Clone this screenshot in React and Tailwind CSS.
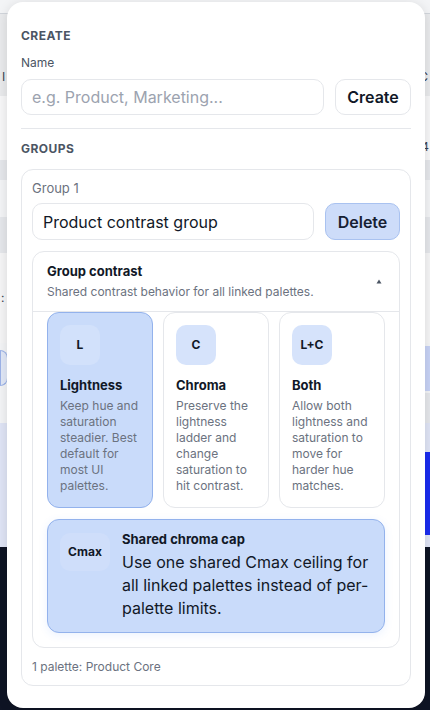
import React from "react";

const font = { fontFamily: "Inter, 'Noto Sans', sans-serif" };

function Option({ badge, title, lines, selected }) {
  return (
    <div
      className={
        "flex flex-col rounded-[12px] border px-[12px] pb-[13px] pt-[12px] " +
        (selected ? "border-[#93b2ec] bg-[#c9dbfa]" : "border-[#e5e7eb] bg-white")
      }
    >
      <div
        className={
          "flex h-[40px] w-[40px] items-center justify-center rounded-[10px] text-[12px] font-bold text-[#111827] " +
          (selected ? "bg-[#d2e1fb]" : "bg-[#d6e3fb]")
        }
      >
        {badge}
      </div>
      <div className="mt-[12px] text-[13px] font-bold leading-[16px] text-[#111827]">{title}</div>
      <div className="mt-[5px] text-[12px] leading-[16px] text-[#6b7280]">
        {lines.map((l, i) => (
          <div key={i} className="whitespace-nowrap">{l}</div>
        ))}
      </div>
    </div>
  );
}

export default function App() {
  return (
    <div className="relative h-[710px] w-[430px] overflow-hidden" style={font}>
      {/* background page */}
      <div className="flex h-full flex-col text-[12px] text-[#374151]">
        <div className="h-[14px] border-b border-[#d1d5db] bg-[#f3f4f6]" />
        <div className="flex h-[82px] items-end justify-between bg-[#e9eaec] px-[2px] pb-[10px]">
          <span>I</span>
          <span>C</span>
        </div>
        <div className="flex h-[64px] items-end justify-end bg-[#f7f7f8] px-[1px] pb-[4px]">
          <span>4</span>
        </div>
        <div className="h-[20px] bg-[#e5e7eb]" />
        <div className="h-[37px] bg-[#f3f4f6]" />
        <div className="h-[36px] bg-[#e5e7eb]" />
        <div className="flex h-[90px] items-center bg-[#f5f5f6] pl-[1px]">
          <span>:</span>
        </div>
        <div className="flex h-[50px] items-center justify-between bg-[#f3f4f6]">
          <div className="h-[36px] w-[8px] rounded-r-[8px] border border-[#9cb3e8] bg-[#e1e8f7]" />
          <div className="h-[45px] w-[6px] bg-[#c7d2f5]" />
        </div>
        <div className="flex h-[30px] justify-end bg-[#f3f4f6]">
          <div className="w-[6px] bg-[#e5e7eb]" />
        </div>
        <div className="flex h-[124px] flex-col items-end bg-[#dfe4f5]">
          <div className="h-[29px]" />
          <div className="h-[83px] w-[6px] bg-[#1a2cf0]" />
        </div>
        <div className="flex-1 bg-[#0e1424]" />
      </div>

      {/* popover panel */}
      <div className="absolute left-[7px] top-[2px] flex h-[706px] w-[418px] flex-col rounded-[16px] bg-white px-[14px] pt-[26px] shadow-[0_2px_12px_rgba(0,0,0,0.12)]">
        <div className="text-[12px] font-bold uppercase leading-[16px] tracking-[0.04em] text-[#4b5563]">Create</div>
        <div className="mt-[11px] text-[12px] leading-[16px] text-[#4b5563]">Name</div>
        <div className="mt-[8px] flex gap-[11px]">
          <div className="flex h-[36px] flex-1 items-center rounded-[10px] border border-[#e5e7eb] px-[10px] text-[16px] text-[#9ca3af]">
            e.g. Product, Marketing...
          </div>
          <div className="flex h-[36px] w-[76px] items-center justify-center rounded-[10px] border border-[#e5e7eb] text-[16px] font-semibold text-[#111827]">
            Create
          </div>
        </div>
        <div className="mt-[13px] h-px bg-[#e5e7eb]" />
        <div className="mt-[12px] text-[12px] font-bold uppercase leading-[16px] tracking-[0.04em] text-[#4b5563]">Groups</div>

        <div className="mt-[12px] rounded-[12px] border border-[#e5e7eb] p-[10px]">
          <div className="text-[13px] leading-[16px] text-[#6b7280]">Group 1</div>
          <div className="mt-[7px] flex gap-[11px]">
            <div className="flex h-[37px] flex-1 items-center rounded-[10px] border border-[#e5e7eb] px-[10px] text-[16px] text-[#111827]">
              Product contrast group
            </div>
            <div className="flex h-[37px] w-[75px] items-center justify-center rounded-[10px] border border-[#a9c2f0] bg-[#cddcf9] text-[16px] font-semibold text-[#172033]">
              Delete
            </div>
          </div>

          <div className="mt-[11px] rounded-[12px] border border-[#e5e7eb]">
            <div className="flex items-center justify-between border-b border-[#e5e7eb] px-[14px] pb-[11px] pt-[11px]">
              <div>
                <div className="text-[13px] font-bold leading-[16px] text-[#111827]">Group contrast</div>
                <div className="mt-[5px] text-[12px] leading-[16px] text-[#6b7280]">
                  Shared contrast behavior for all linked palettes.
                </div>
              </div>
              <svg width="6" height="5" viewBox="0 0 6 5" className="mr-[3px]">
                <path d="M3 0.5 L5.5 4.5 L0.5 4.5 Z" fill="#4b5563" />
              </svg>
            </div>
            <div className="px-[14px] pb-[14px]">
              <div className="grid grid-cols-3 gap-[10px]">
                <Option
                  selected
                  badge="L"
                  title="Lightness"
                  lines={["Keep hue and", "saturation", "steadier. Best", "default for", "most UI", "palettes."]}
                />
                <Option
                  badge="C"
                  title="Chroma"
                  lines={["Preserve the", "lightness", "ladder and", "change", "saturation to", "hit contrast."]}
                />
                <Option
                  badge="L+C"
                  title="Both"
                  lines={["Allow both", "lightness and", "saturation to", "move for", "harder hue", "matches."]}
                />
              </div>
              <div className="mt-[11px] flex gap-[12px] rounded-[12px] border border-[#93b2ec] bg-[#c9dbfa] px-[12px] pb-[12px] pt-[11px] shadow-[0_2px_8px_rgba(59,130,246,0.10)]">
                <div className="mt-[2px] flex h-[38px] w-[50px] shrink-0 items-center justify-center rounded-[10px] bg-[#cfdefa] text-[12px] font-bold text-[#111827]">
                  Cmax
                </div>
                <div className="min-w-0 flex-1">
                  <div className="text-[13px] font-bold leading-[16px] text-[#111827]">Shared chroma cap</div>
                  <div className="mt-[4px] text-[16px] leading-[23px] text-[#111827]">
                    <div>Use one shared Cmax ceiling for</div>
                    <div>all linked palettes instead of per-</div>
                    <div>palette limits.</div>
                  </div>
                </div>
              </div>
            </div>
          </div>
          <div className="mt-[11px] text-[12px] leading-[16px] text-[#6b7280]">1 palette: Product Core</div>
        </div>
      </div>
    </div>
  );
}
